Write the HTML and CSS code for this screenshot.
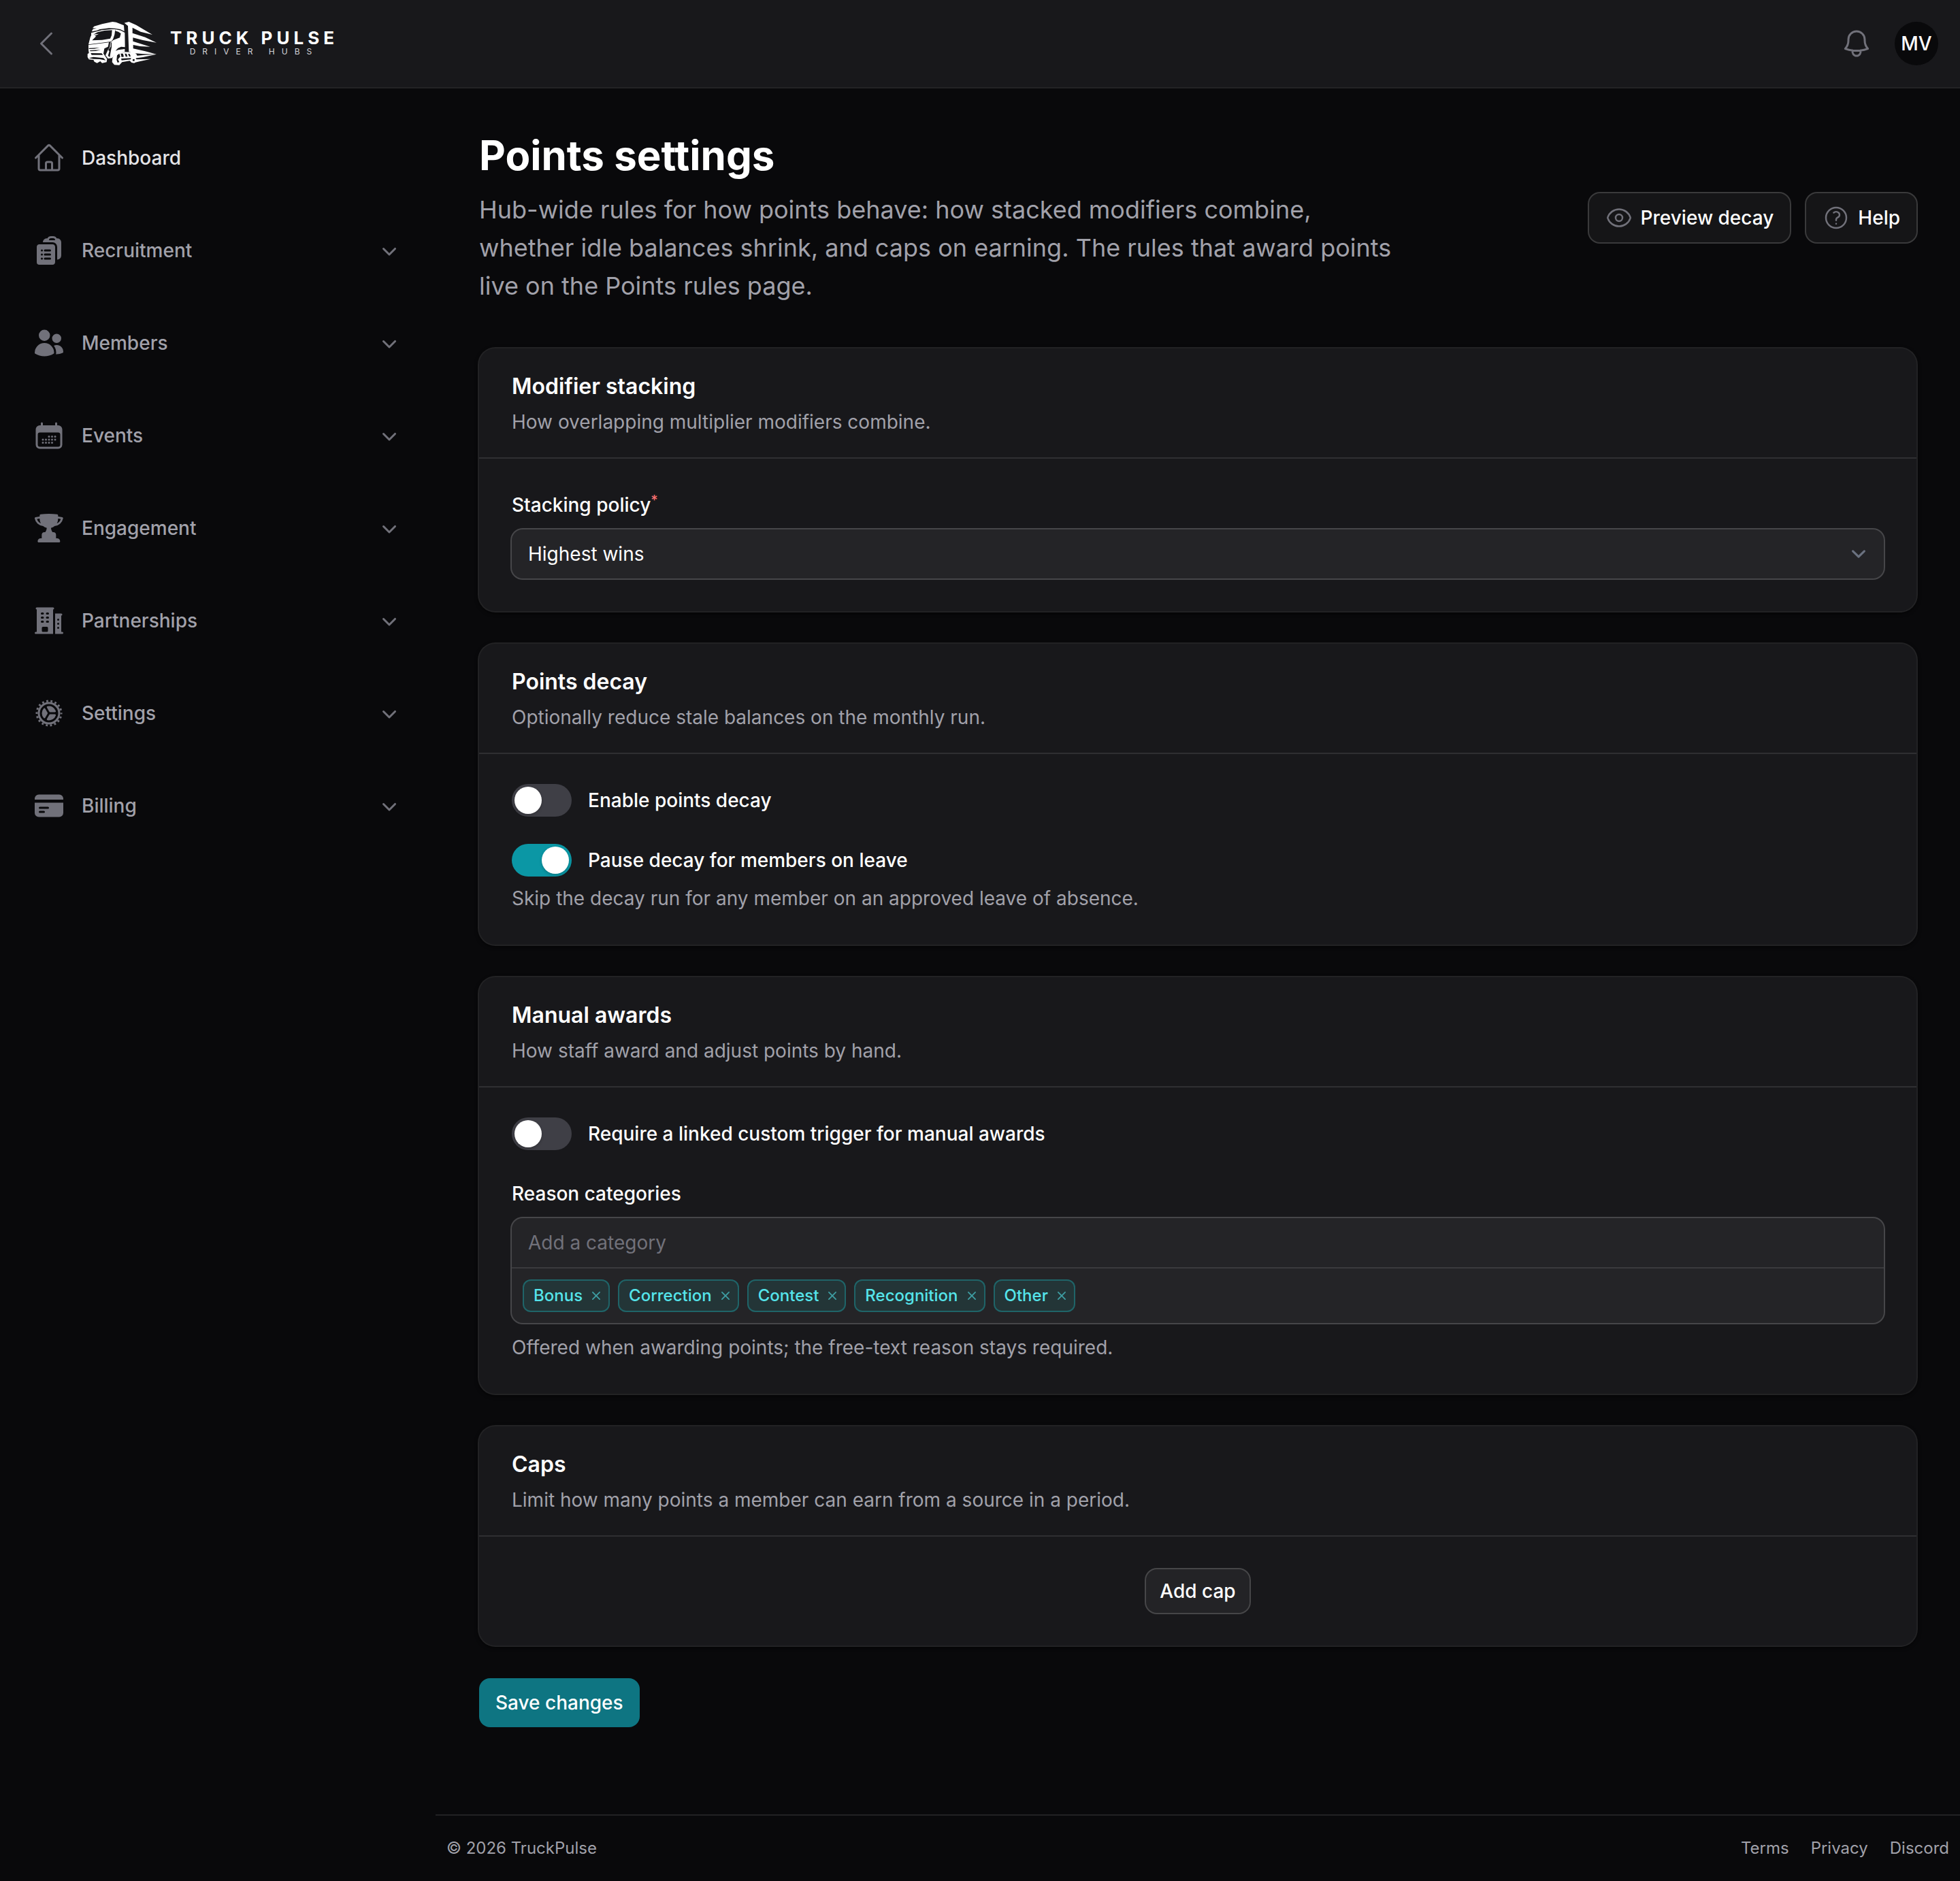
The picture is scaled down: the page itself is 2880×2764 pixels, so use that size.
FILE: index.html
```html
<!DOCTYPE html>
<html lang="en">
<head>
  <meta charset="UTF-8" />
  <meta name="viewport" content="width=device-width, initial-scale=1.0"/>
  <title>Points settings - TruckPulse</title>
  <link rel="stylesheet" href="styles.css">
</head>
<body>
  <svg class="sprite" aria-hidden="true">
    <symbol id="chevron-down" viewBox="0 0 20 20">
      <path fill="currentColor" d="M5.22 8.22a.75.75 0 0 1 1.06 0L10 11.94l3.72-3.72a.75.75 0 1 1 1.06 1.06l-4.25 4.25a.75.75 0 0 1-1.06 0L5.22 9.28a.75.75 0 0 1 0-1.06Z"/>
    </symbol>
    <symbol id="x-mark" viewBox="0 0 20 20">
      <path fill="currentColor" d="M6.28 5.22a.75.75 0 0 0-1.06 1.06L8.94 10l-3.72 3.72a.75.75 0 1 0 1.06 1.06L10 11.06l3.72 3.72a.75.75 0 1 0 1.06-1.06L11.06 10l3.72-3.72a.75.75 0 0 0-1.06-1.06L10 8.94 6.28 5.22Z"/>
    </symbol>
  </svg>

  <header class="topbar">
    <button class="icon-btn" type="button" aria-label="Collapse sidebar">
      <svg class="icon line" viewBox="0 0 24 24"><path d="M15.75 19.5 8.25 12l7.5-7.5"/></svg>
    </button>
    <a class="brand" href="#">
      <svg class="brand-truck" viewBox="84 66 306 192" aria-hidden="true">
        <!-- cab roof -->
        <path d="M104 109 L110 98 L126 95 L108 94 L115 86 L150 76 L196 66 L212 68 L246 82 L248 108 L230 99 L206 95 L180 94 L140 99 L128 104 Z"/>
        <!-- windscreen frame -->
        <path d="M102 115 L150 103 L192 99 L208 99 L205 122 L198 143 L190 153 L150 158 L90 166 L98 134 L102 126 Z M130 112 L112 122 L136 119 L116 129 L124 130 L106 148 L150 146 L186 140 L192 126 L194 103 L160 105 Z" fill-rule="evenodd"/>
        <!-- cab side and door -->
        <path d="M208 99 L232 104 L250 114 L251 178 L234 176 L220 182 L209 194 L222 190 L250 186 L250 198 L226 200 L208 208 L200 220 L193 226 L176 228 L165 214 L176 190 L184 178 L186 158 L198 148 L206 144 L228 136 L233 118 L222 110 L208 106 Z M188 160 L188 176 L177 190 L182 196 L176 216 L184 222 L188 198 L192 178 L192 156 Z" fill-rule="evenodd"/>
        <!-- grille -->
        <path d="M90 168 L180 157 L176 176 L160 184 L156 206 L172 230 L170 244 L150 248 L142 240 L128 248 L116 242 L112 234 L92 232 L86 222 L86 208 L92 204 L90 190 Z M92 182 L140 180 L116 185 L92 186 Z M96 192 L144 190 L122 195 L98 196 Z M100 204 L148 205 L154 212 L104 212 Z M92 226 L112 221 L156 226 L166 236 L140 231 L112 230 Z" fill-rule="evenodd"/>
        <!-- front wheel -->
        <path d="M196 226 L206 208 L222 198 L286 200 L300 206 L308 222 L298 228 L306 236 L292 248 L280 246 L272 238 L238 244 L226 257 L204 256 L194 244 Z M214 234 L216 214 L226 206 L230 220 L220 232 L226 244 L218 246 Z M232 206 L242 206 L246 220 L236 222 Z M250 206 L258 207 L262 220 L254 220 Z M264 208 L272 208 L276 218 L270 220 Z M234 228 L278 226 L276 232 L236 236 Z M286 230 L294 232 L292 240 L284 238 Z" fill-rule="evenodd"/>
        <!-- trailer and speed lines -->
        <path d="M248 71 L268 66 L300 80 L372 123 L320 110 L284 92 L284 116 L340 134 L390 158 L330 147 L286 136 L286 152 L362 176 L318 174 L287 168 L287 184 L340 196 L390 209 L330 208 L288 204 L268 198 L264 84 Z"/>
        <path d="M300 216 L340 212 L390 209 L330 222 L304 226 Z M300 232 L364 230 L318 240 L290 247 Z"/>
      </svg>
      <span class="brand-text">
        <span class="brand-name">TRUCK PULSE</span>
        <span class="brand-tag">DRIVER HUBS</span>
      </span>
    </a>
    <div class="topbar-end">
      <button class="icon-btn" type="button" aria-label="Notifications">
        <svg class="icon line" viewBox="0 0 24 24"><path d="M14.857 17.082a23.848 23.848 0 0 0 5.454-1.31A8.967 8.967 0 0 1 18 9.75V9A6 6 0 0 0 6 9v.75a8.967 8.967 0 0 1-2.312 6.022c1.733.64 3.56 1.085 5.455 1.31m5.714 0a24.255 24.255 0 0 1-5.714 0m5.714 0a3 3 0 1 1-5.714 0"/></svg>
      </button>
      <button class="avatar" type="button">MV</button>
    </div>
  </header>

  <div class="layout">
    <nav class="sidebar">
      <a class="nav-item active" href="#">
        <svg class="icon line" viewBox="0 0 24 24"><path d="m2.25 12 8.954-8.955c.44-.439 1.152-.439 1.591 0L21.75 12M4.5 9.75v10.125c0 .621.504 1.125 1.125 1.125H9.75v-4.875c0-.621.504-1.125 1.125-1.125h2.25c.621 0 1.125.504 1.125 1.125V21h4.125c.621 0 1.125-.504 1.125-1.125V9.75M8.25 21h8.25"/></svg>
        <span>Dashboard</span>
      </a>
      <button class="nav-item" type="button">
        <svg class="icon solid" viewBox="0 0 24 24"><path d="M7.502 6h7.128A3.375 3.375 0 0 1 18 9.375v9.375a3 3 0 0 0 3-3V6.108c0-1.505-1.125-2.811-2.664-2.94a48.972 48.972 0 0 0-.673-.05A3 3 0 0 0 15 1.5h-1.5a3 3 0 0 0-2.663 1.618c-.225.015-.45.032-.673.05C8.662 3.295 7.554 4.542 7.502 6ZM13.5 3A1.5 1.5 0 0 0 12 4.5h4.5A1.5 1.5 0 0 0 15 3h-1.5Z"/><path d="M3 9.375C3 8.339 3.84 7.5 4.875 7.5h9.75c1.036 0 1.875.84 1.875 1.875v11.25c0 1.035-.84 1.875-1.875 1.875h-9.75A1.875 1.875 0 0 1 3 20.625V9.375ZM6 12a.75.75 0 0 1 .75-.75h.008a.75.75 0 0 1 .75.75v.008a.75.75 0 0 1-.75.75H6.75a.75.75 0 0 1-.75-.75V12Zm2.25 0a.75.75 0 0 1 .75-.75h3.75a.75.75 0 0 1 0 1.5H9a.75.75 0 0 1-.75-.75ZM6 15a.75.75 0 0 1 .75-.75h.008a.75.75 0 0 1 .75.75v.008a.75.75 0 0 1-.75.75H6.75a.75.75 0 0 1-.75-.75V15Zm2.25 0a.75.75 0 0 1 .75-.75h3.75a.75.75 0 0 1 0 1.5H9a.75.75 0 0 1-.75-.75ZM6 18a.75.75 0 0 1 .75-.75h.008a.75.75 0 0 1 .75.75v.008a.75.75 0 0 1-.75.75H6.75a.75.75 0 0 1-.75-.75V18Zm2.25 0a.75.75 0 0 1 .75-.75h3.75a.75.75 0 0 1 0 1.5H9a.75.75 0 0 1-.75-.75Z"/></svg>
        <span>Recruitment</span>
        <svg class="icon-sm"><use href="#chevron-down"/></svg>
      </button>
      <button class="nav-item" type="button">
        <svg class="icon solid" viewBox="0 0 24 24"><path d="M4.5 6.375a4.125 4.125 0 1 1 8.25 0 4.125 4.125 0 0 1-8.25 0ZM14.25 8.625a3.375 3.375 0 1 1 6.75 0 3.375 3.375 0 0 1-6.75 0ZM1.5 19.125a7.125 7.125 0 0 1 14.25 0v.003l-.001.119a.75.75 0 0 1-.363.63 13.067 13.067 0 0 1-6.761 1.873c-2.472 0-4.786-.684-6.76-1.873a.75.75 0 0 1-.364-.63l-.001-.122ZM17.25 19.128l-.001.144a2.25 2.25 0 0 1-.233.96 10.088 10.088 0 0 0 5.06-1.01.75.75 0 0 0 .42-.643 4.875 4.875 0 0 0-6.957-4.611 8.586 8.586 0 0 1 1.71 5.157v.003Z"/></svg>
        <span>Members</span>
        <svg class="icon-sm"><use href="#chevron-down"/></svg>
      </button>
      <button class="nav-item" type="button">
        <svg class="icon solid" viewBox="0 0 24 24"><path d="M6.75 2.25A.75.75 0 0 1 7.5 3v1.5h9V3A.75.75 0 0 1 18 3v1.5h.75a3 3 0 0 1 3 3v11.25a3 3 0 0 1-3 3H5.25a3 3 0 0 1-3-3V7.5a3 3 0 0 1 3-3H6V3a.75.75 0 0 1 .75-.75Zm13.5 9a1.5 1.5 0 0 0-1.5-1.5H5.25a1.5 1.5 0 0 0-1.5 1.5v7.5a1.5 1.5 0 0 0 1.5 1.5h13.5a1.5 1.5 0 0 0 1.5-1.5v-7.5Z"/><circle cx="12" cy="12.75" r=".75"/><circle cx="14.25" cy="12.75" r=".75"/><circle cx="16.5" cy="12.75" r=".75"/><circle cx="7.5" cy="15" r=".75"/><circle cx="9.75" cy="15" r=".75"/><circle cx="12" cy="15" r=".75"/><circle cx="14.25" cy="15" r=".75"/><circle cx="16.5" cy="15" r=".75"/><circle cx="7.5" cy="17.25" r=".75"/><circle cx="9.75" cy="17.25" r=".75"/><circle cx="12" cy="17.25" r=".75"/><circle cx="14.25" cy="17.25" r=".75"/></svg>
        <span>Events</span>
        <svg class="icon-sm"><use href="#chevron-down"/></svg>
      </button>
      <button class="nav-item" type="button">
        <svg class="icon solid" viewBox="0 0 24 24"><path d="M5.166 2.621v.858c-1.035.148-2.059.33-3.071.543a.75.75 0 0 0-.584.859 6.753 6.753 0 0 0 6.138 5.6 6.73 6.73 0 0 0 2.743 1.346A6.707 6.707 0 0 1 9.279 15H8.54c-1.036 0-1.875.84-1.875 1.875V19.5h-.75a2.25 2.25 0 0 0-2.25 2.25c0 .414.336.75.75.75h15a.75.75 0 0 0 .75-.75 2.25 2.25 0 0 0-2.25-2.25h-.75v-2.625c0-1.036-.84-1.875-1.875-1.875h-.739a6.706 6.706 0 0 1-1.112-3.173 6.73 6.73 0 0 0 2.743-1.347 6.753 6.753 0 0 0 6.139-5.6.75.75 0 0 0-.585-.858 47.077 47.077 0 0 0-3.07-.543V2.62a.75.75 0 0 0-.658-.744 49.22 49.22 0 0 0-6.093-.377c-2.063 0-4.096.128-6.093.377a.75.75 0 0 0-.657.744Zm0 2.629c0 1.196.312 2.32.857 3.294A5.266 5.266 0 0 1 3.16 5.337a45.6 45.6 0 0 1 2.006-.343v.256Zm13.5 0v-.256c.674.1 1.343.214 2.006.343a5.265 5.265 0 0 1-2.863 3.207 6.72 6.72 0 0 0 .857-3.294Z"/></svg>
        <span>Engagement</span>
        <svg class="icon-sm"><use href="#chevron-down"/></svg>
      </button>
      <button class="nav-item" type="button">
        <svg class="icon solid" viewBox="0 0 24 24"><path d="M3 2.25a.75.75 0 0 0 0 1.5v16.5h-.75a.75.75 0 0 0 0 1.5H15v-18a.75.75 0 0 0 0-1.5H3ZM6.75 19.5v-2.25a.75.75 0 0 1 .75-.75h3a.75.75 0 0 1 .75.75v2.25a.75.75 0 0 1-.75.75h-3a.75.75 0 0 1-.75-.75ZM6 6.75A.75.75 0 0 1 6.75 6h.75a.75.75 0 0 1 0 1.5h-.75A.75.75 0 0 1 6 6.75ZM6.75 9a.75.75 0 0 0 0 1.5h.75a.75.75 0 0 0 0-1.5h-.75ZM6 12.75a.75.75 0 0 1 .75-.75h.75a.75.75 0 0 1 0 1.5h-.75a.75.75 0 0 1-.75-.75ZM10.5 6a.75.75 0 0 0 0 1.5h.75a.75.75 0 0 0 0-1.5h-.75Zm-.75 3.75A.75.75 0 0 1 10.5 9h.75a.75.75 0 0 1 0 1.5h-.75a.75.75 0 0 1-.75-.75ZM10.5 12a.75.75 0 0 0 0 1.5h.75a.75.75 0 0 0 0-1.5h-.75ZM16.5 6.75v15h5.25a.75.75 0 0 0 0-1.5H21v-12a.75.75 0 0 0 0-1.5h-4.5ZM18 11.25a.75.75 0 0 1 1.5 0v.008a.75.75 0 0 1-1.5 0v-.008ZM18 14.25a.75.75 0 0 1 1.5 0v.008a.75.75 0 0 1-1.5 0v-.008ZM18 17.25a.75.75 0 0 1 1.5 0v.008a.75.75 0 0 1-1.5 0v-.008Z"/></svg>
        <span>Partnerships</span>
        <svg class="icon-sm"><use href="#chevron-down"/></svg>
      </button>
      <button class="nav-item" type="button">
        <svg class="icon solid" viewBox="0 0 24 24"><path d="M17.004 10.407c.138.435-.216.842-.672.842h-3.465a.75.75 0 0 1-.65-.375l-1.732-3c-.229-.396-.053-.907.393-1.004a5.252 5.252 0 0 1 6.126 3.537ZM8.12 8.464c.307-.338.838-.235 1.066.16l1.732 3a.75.75 0 0 1 0 .75l-1.732 3.001c-.229.397-.76.5-1.067.161A5.23 5.23 0 0 1 6.75 12a5.23 5.23 0 0 1 1.37-3.536ZM10.878 17.13c-.447-.098-.623-.608-.394-1.004l1.733-3.002a.75.75 0 0 1 .65-.375h3.465c.457 0 .81.407.672.842a5.252 5.252 0 0 1-6.126 3.539Z"/><circle class="gear" cx="12" cy="12" r="7.5"/><circle class="gear teeth" cx="12" cy="12" r="9"/></svg>
        <span>Settings</span>
        <svg class="icon-sm"><use href="#chevron-down"/></svg>
      </button>
      <button class="nav-item" type="button">
        <svg class="icon solid" viewBox="0 0 24 24"><path d="M4.5 3.75a3 3 0 0 0-3 3v.75h21v-.75a3 3 0 0 0-3-3h-15ZM22.5 9.75h-21v7.5a3 3 0 0 0 3 3h15a3 3 0 0 0 3-3v-7.5Zm-18 3.75a.75.75 0 0 1 .75-.75h6a.75.75 0 0 1 0 1.5h-6a.75.75 0 0 1-.75-.75Zm.75 2.25a.75.75 0 0 0 0 1.5h3a.75.75 0 0 0 0-1.5h-3Z"/></svg>
        <span>Billing</span>
        <svg class="icon-sm"><use href="#chevron-down"/></svg>
      </button>
    </nav>

    <div class="content">
      <main class="page">
        <div class="page-header">
          <div>
            <h1>Points settings</h1>
            <p class="lead">Hub-wide rules for how points behave: how stacked modifiers combine, whether idle balances shrink, and caps on earning. The rules that award points live on the Points rules page.</p>
          </div>
          <div class="actions">
            <button class="btn" type="button">
              <svg class="icon-sm line" viewBox="0 0 24 24"><path d="M2.036 12.322a1.012 1.012 0 0 1 0-.639C3.423 7.51 7.36 4.5 12 4.5c4.638 0 8.573 3.007 9.963 7.178.07.207.07.431 0 .639C20.577 16.49 16.64 19.5 12 19.5c-4.638 0-8.573-3.007-9.963-7.178Z"/><path d="M15 12a3 3 0 1 1-6 0 3 3 0 0 1 6 0Z"/></svg>
              Preview decay
            </button>
            <button class="btn" type="button">
              <svg class="icon-sm line" viewBox="0 0 24 24"><path d="M9.879 7.519c1.171-1.025 3.071-1.025 4.242 0 1.172 1.025 1.172 2.687 0 3.712-.203.179-.43.326-.67.442-.745.361-1.45.999-1.45 1.827v.75M21 12a9 9 0 1 1-18 0 9 9 0 0 1 18 0Zm-9 5.25h.008v.008H12v-.008Z"/></svg>
              Help
            </button>
          </div>
        </div>

        <form class="sections">
          <section class="card">
            <div class="card-header">
              <h2>Modifier stacking</h2>
              <p>How overlapping multiplier modifiers combine.</p>
            </div>
            <div class="card-body">
              <div class="field">
                <label for="policy">Stacking policy<sup>*</sup></label>
                <div class="select">
                  <select id="policy">
                    <option>Highest wins</option>
                  </select>
                  <svg viewBox="0 0 20 20" aria-hidden="true"><path d="m6 8 4 4 4-4"/></svg>
                </div>
              </div>
            </div>
          </section>

          <section class="card">
            <div class="card-header">
              <h2>Points decay</h2>
              <p>Optionally reduce stale balances on the monthly run.</p>
            </div>
            <div class="card-body">
              <div class="field">
                <label class="toggle"><input type="checkbox" role="switch">Enable points decay</label>
              </div>
              <div class="field">
                <label class="toggle"><input type="checkbox" role="switch" checked>Pause decay for members on leave</label>
                <p class="hint">Skip the decay run for any member on an approved leave of absence.</p>
              </div>
            </div>
          </section>

          <section class="card">
            <div class="card-header">
              <h2>Manual awards</h2>
              <p>How staff award and adjust points by hand.</p>
            </div>
            <div class="card-body">
              <div class="field">
                <label class="toggle"><input type="checkbox" role="switch">Require a linked custom trigger for manual awards</label>
              </div>
              <div class="field">
                <label for="category">Reason categories</label>
                <div class="tags-input">
                  <input id="category" type="text" placeholder="Add a category">
                  <div class="tags">
                    <span class="tag">Bonus<button type="button" aria-label="Remove Bonus"><svg><use href="#x-mark"/></svg></button></span>
                    <span class="tag">Correction<button type="button" aria-label="Remove Correction"><svg><use href="#x-mark"/></svg></button></span>
                    <span class="tag">Contest<button type="button" aria-label="Remove Contest"><svg><use href="#x-mark"/></svg></button></span>
                    <span class="tag">Recognition<button type="button" aria-label="Remove Recognition"><svg><use href="#x-mark"/></svg></button></span>
                    <span class="tag">Other<button type="button" aria-label="Remove Other"><svg><use href="#x-mark"/></svg></button></span>
                  </div>
                </div>
                <p class="hint">Offered when awarding points; the free-text reason stays required.</p>
              </div>
            </div>
          </section>

          <section class="card">
            <div class="card-header">
              <h2>Caps</h2>
              <p>Limit how many points a member can earn from a source in a period.</p>
            </div>
            <div class="card-body centered">
              <button class="btn btn-sm" type="button">Add cap</button>
            </div>
          </section>

          <button class="btn btn-primary" type="submit">Save changes</button>
        </form>
      </main>

      <footer class="footer">
        <span>© 2026 TruckPulse</span>
        <div class="footer-links">
          <a href="#">Terms</a>
          <a href="#">Privacy</a>
          <a href="#">Discord</a>
        </div>
      </footer>
    </div>
  </div>
</body>
</html>
```
FILE: styles.css
```css
* {
  box-sizing: border-box;
}

body {
  margin: 0;
  min-height: 100vh;
  display: flex;
  flex-direction: column;
  font-family: Inter, 'Liberation Sans', sans-serif;
  font-size: 28px;
  line-height: 40px;
  color: #fff;
  background: #09090b;
}

h1, h2, p {
  margin: 0;
}

button, input, select {
  font: inherit;
  color: inherit;
}

button {
  border: none;
  background: none;
  cursor: pointer;
}

a {
  color: inherit;
  text-decoration: none;
}

svg {
  display: block;
  flex-shrink: 0;
}

.sprite {
  display: none;
}

.icon {
  width: 48px;
  height: 48px;
  color: #71717a;
}

.icon-sm {
  width: 40px;
  height: 40px;
  color: #71717a;
}

.line {
  fill: none;
  stroke: currentColor;
  stroke-width: 1.5;
  stroke-linecap: round;
  stroke-linejoin: round;
}

.solid {
  fill: currentColor;
  fill-rule: evenodd;
}

.gear {
  fill: none;
  stroke: currentColor;
  stroke-width: 1.5;
}

.teeth {
  stroke-dasharray: 1.4 1.7416;
  stroke-dashoffset: 0.7;
}

/* top bar */
.topbar {
  display: flex;
  align-items: center;
  height: 128px;
  padding: 0 32px;
  background: #18181b;
  box-shadow: 0 2px 0 #232325;
}

.icon-btn {
  padding: 12px;
}

.brand {
  display: flex;
  align-items: center;
  gap: 20px;
  margin-left: 24px;
}

.brand-truck {
  width: 102px;
  height: 64px;
  fill: #fff;
}

.brand-text {
  display: flex;
  flex-direction: column;
  align-items: center;
}

.brand-name {
  font-size: 26px;
  line-height: 24px;
  font-weight: 700;
  letter-spacing: 6px;
}

.brand-tag {
  font-size: 12px;
  line-height: 16px;
  letter-spacing: 10px;
  color: #d4d4d8;
}

.topbar-end {
  display: flex;
  align-items: center;
  gap: 20px;
  margin-left: auto;
}

.avatar {
  width: 64px;
  height: 64px;
  padding: 0;
  border-radius: 50%;
  background: #09090b;
  font-weight: 500;
}

/* layout */
.layout {
  flex: 1;
  display: grid;
  grid-template-columns: 640px 1fr;
}

.sidebar {
  display: flex;
  flex-direction: column;
  gap: 56px;
  padding: 64px 32px;
}

.nav-item {
  display: flex;
  align-items: center;
  gap: 24px;
  padding: 16px;
  font-weight: 500;
  text-align: left;
  color: #a1a1aa;
}

.nav-item span {
  flex: 1;
}

.nav-item.active {
  color: #e4e4e7;
}

.content {
  display: flex;
  flex-direction: column;
  min-width: 0;
}

.page {
  flex: 1;
  padding: 64px;
}

.page-header {
  display: flex;
  align-items: center;
  justify-content: space-between;
  gap: 32px;
  margin-bottom: 64px;
}

h1 {
  font-size: 60px;
  line-height: 72px;
  font-weight: 700;
}

.lead {
  max-width: 1344px;
  margin-top: 16px;
  font-size: 36px;
  line-height: 56px;
  color: #a1a1aa;
}

.actions {
  display: flex;
  flex-shrink: 0;
  gap: 24px;
}

.btn {
  display: inline-flex;
  align-items: center;
  gap: 12px;
  padding: 16px 24px;
  border-radius: 16px;
  background: rgba(255, 255, 255, 0.05);
  box-shadow: 0 0 0 2px rgba(255, 255, 255, 0.2);
  font-weight: 500;
}

.btn-sm {
  padding: 12px 20px;
}

.btn-primary {
  background: #0e7582;
  box-shadow: none;
}

/* sections */
.sections {
  display: flex;
  flex-direction: column;
  align-items: flex-start;
  gap: 48px;
}

.card {
  width: 100%;
  border-radius: 24px;
  background: #18181b;
  box-shadow: 0 0 0 2px #222224, 0 2px 6px #000;
}

.card-header {
  padding: 32px 48px;
  border-bottom: 2px solid #2f2f32;
}

.card-header h2 {
  margin-bottom: 8px;
  font-size: 32px;
  line-height: 48px;
  font-weight: 600;
}

.card-header p,
.hint {
  color: #a1a1aa;
}

.card-body {
  display: flex;
  flex-direction: column;
  gap: 48px;
  padding: 48px;
}

.centered {
  align-items: center;
}

.field {
  display: flex;
  flex-direction: column;
  gap: 16px;
}

label {
  font-weight: 500;
}

sup {
  font-size: 20px;
  line-height: 0;
  color: #f87171;
}

.select {
  display: grid;
  align-items: center;
  border-radius: 16px;
  background: #242427;
  box-shadow: 0 0 0 2px #464649;
}

.select select {
  grid-area: 1 / 1;
  width: 100%;
  height: 72px;
  padding: 0 72px 0 24px;
  border: none;
  border-radius: 16px;
  background: transparent;
  appearance: none;
}

.select svg {
  grid-area: 1 / 1;
  justify-self: end;
  width: 42px;
  height: 42px;
  margin-right: 16px;
  fill: none;
  stroke: #6b7280;
  stroke-width: 1.5;
  stroke-linecap: round;
  stroke-linejoin: round;
  pointer-events: none;
}

.toggle {
  display: flex;
  align-items: center;
  gap: 24px;
}

.toggle input {
  display: flex;
  width: 88px;
  height: 48px;
  margin: -4px 0;
  padding: 4px;
  border-radius: 24px;
  background: #3f3f46;
  appearance: none;
  cursor: pointer;
}

.toggle input::before {
  content: "";
  width: 40px;
  height: 40px;
  border-radius: 50%;
  background: #fff;
  box-shadow: 0 2px 4px rgba(0, 0, 0, 0.2);
}

.toggle input:checked {
  justify-content: flex-end;
  background: #0b97a5;
}

.tags-input {
  border-radius: 16px;
  background: #242427;
  box-shadow: 0 0 0 2px #464649;
}

.tags-input input {
  display: block;
  width: 100%;
  height: 72px;
  padding: 0 24px;
  border: none;
  background: transparent;
}

.tags-input input::placeholder {
  color: #71717a;
}

.tags {
  display: flex;
  flex-wrap: wrap;
  gap: 12px;
  padding: 16px;
  border-top: 2px solid #3a3a3d;
}

.tag {
  display: inline-flex;
  align-items: center;
  padding: 8px 0 8px 16px;
  border-radius: 12px;
  background: #233537;
  box-shadow: inset 0 0 0 2px #1f6468;
  font-size: 24px;
  line-height: 32px;
  font-weight: 500;
  color: #55e4ea;
}

.tag button {
  padding: 0 8px;
  color: #3e9ea3;
}

.tag svg {
  width: 24px;
  height: 24px;
}

/* footer */
.footer {
  display: flex;
  justify-content: space-between;
  padding: 32px 16px;
  border-top: 2px solid #222224;
  font-size: 24px;
  line-height: 32px;
  color: #a1a1aa;
}

.footer-links {
  display: flex;
  gap: 32px;
}
```
